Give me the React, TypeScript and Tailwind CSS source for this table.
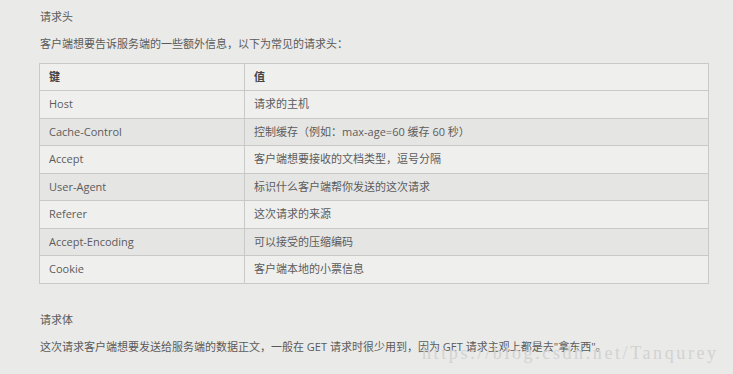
import type { JSX } from 'react'

const rows: [string, string][] = [
  ['Host', '请求的主机'],
  ['Cache-Control', '控制缓存（例如：max-age=60 缓存 60 秒）'],
  ['Accept', '客户端想要接收的文档类型，逗号分隔'],
  ['User-Agent', '标识什么客户端帮你发送的这次请求'],
  ['Referer', '这次请求的来源'],
  ['Accept-Encoding', '可以接受的压缩编码'],
  ['Cookie', '客户端本地的小票信息'],
]

const font = { fontFamily: '"Open Sans", "Noto Sans CJK SC", sans-serif' }

const App = (): JSX.Element => (
  <div
    className="w-[733px] h-[374px] overflow-hidden bg-[#eaeae9] text-[#5a5a5a] text-[11px] relative"
    style={font}
  >
    <div className="pl-[40px] pt-[9px] w-[710px]">
      <p className="h-[16px] leading-[16px]">请求头</p>
      <p className="mt-[11px] h-[16px] leading-[16px]">客户端想要告诉服务端的一些额外信息，以下为常见的请求头：</p>

      <table className="mt-[11px] w-[670px] -ml-[1px] border-collapse border border-[#c9c9c8]">
        <thead>
          <tr className="h-[27px] bg-[#efefee]">
            <th className="w-[205px] border border-[#c9c9c8] text-left font-bold pl-[9px] text-[#444]">键</th>
            <th className="border border-[#c9c9c8] text-left font-bold pl-[9px] text-[#444]">值</th>
          </tr>
        </thead>
        <tbody>
          {rows.map(([k, v], i) => (
            <tr key={k} className={`h-[27.5px] ${i % 2 === 1 ? 'bg-[#e5e5e4]' : 'bg-[#efefee]'}`}>
              <td className="border border-[#c9c9c8] pl-[9px] text-[#5c5c5c]">{k}</td>
              <td className="border border-[#c9c9c8] pl-[9px] text-[#5c5c5c]">{v}</td>
            </tr>
          ))}
        </tbody>
      </table>

      <p className="mt-[28px] h-[16px] leading-[16px]">请求体</p>
      <p className="mt-[11px] h-[16px] leading-[16px]">
        这次请求客户端想要发送给服务端的数据正文，一般在 GET 请求时很少用到，因为 GET 请求主观上都是去"拿东西"。
      </p>
    </div>

    {/* watermark */}
    <div
      className="absolute left-[422px] top-[343px] text-[18px] leading-[20px] tracking-[2.6px] text-[#d2d2d1] whitespace-nowrap pointer-events-none"
      style={{ fontFamily: '"Liberation Serif", serif' }}
    >
      https://blog.csdn.net/Tanqurey
    </div>
  </div>
)

export default App
